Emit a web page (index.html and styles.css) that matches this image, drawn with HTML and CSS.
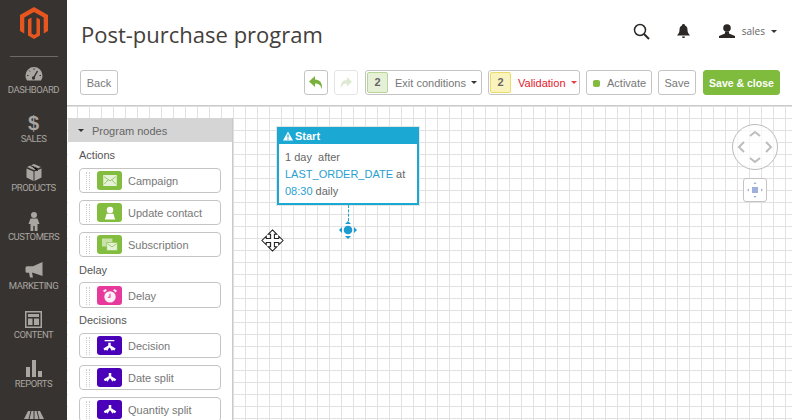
FILE: index.html
```html
<!DOCTYPE html>
<html lang="en">
<head>
<meta charset="utf-8">
<title>Post-purchase program</title>
<link rel="stylesheet" href="styles.css">
</head>
<body>
<div class="app">
  <nav class="sidebar">
    <div class="logo">
      <svg width="28" height="32" viewBox="0 0 28 32"><path fill="#e8561f" d="M14 0 28 8V24L23.700 26.500V10.500L14 5 4.300 10.500V26.500L0 24V8Z"/><path fill="#e8561f" d="M14 32 8 28.500V12.400L11.500 10.400V26.500L14 28 16.500 26.500V10.400L20 12.400V28.500Z"/></svg>
    </div>
    <a class="nav-item">
      <svg width="18" height="16" viewBox="0 0 18 16"><path fill="#a9a5a0" d="M9 1A8.500 8.500 0 0 0 .5 9.500C.5 11.500 1 13 2 14.500H16C17 13 17.500 11.500 17.500 9.500A8.500 8.500 0 0 0 9 1Z"/><path stroke="#373330" stroke-width="1.500" d="M8.500 12 12.500 5"/><circle cx="8.500" cy="12" r="1.700" fill="#373330"/><path stroke="#373330" d="M9 2.500V4M4 4.500 5 5.500M2 9.500H3.500M14.500 9.500H16"/></svg>
      <span>DASHBOARD</span>
    </a>
    <a class="nav-item">
      <span class="dollar">$</span>
      <span>SALES</span>
    </a>
    <a class="nav-item">
      <svg width="16" height="17" viewBox="0 0 16 17"><path fill="#a9a5a0" d="M8 0 15 3 8 6 1 3Z"/><path fill="#a9a5a0" d="M.5 4.500 7.500 7.500V17L.5 13.500ZM15.500 4.500 8.500 7.500V17L15.500 13.500Z"/><path stroke="#373330" d="M4.500 1.500 11.500 4.500V7"/></svg>
      <span>PRODUCTS</span>
    </a>
    <a class="nav-item">
      <svg width="12" height="19" viewBox="0 0 12 19"><circle cx="6" cy="3" r="3" fill="#a9a5a0"/><path fill="#a9a5a0" d="M2.500 6.500H9.500L11.500 12H9.500V19H6.700V14H5.300V19H2.500V12H.5Z"/></svg>
      <span>CUSTOMERS</span>
    </a>
    <a class="nav-item">
      <svg width="18" height="16" viewBox="0 0 18 16"><path fill="#a9a5a0" d="M17.500 0V14L8 10.800H7L8 15.500H5L4 10.800H2A1.500 1.500 0 0 1 .5 9.300V5.700A1.500 1.500 0 0 1 2 4.200H8Z"/></svg>
      <span>MARKETING</span>
    </a>
    <a class="nav-item">
      <svg width="17" height="17" viewBox="0 0 17 17"><path fill="#a9a5a0" fill-rule="evenodd" d="M0 0H17V17H0ZM1.500 1.500V15.500H15.500V1.500Z"/><path fill="#a9a5a0" d="M3 3H14V6H3ZM3 7.500H7.500V14H3ZM9 7.500H14V14H9Z"/></svg>
      <span>CONTENT</span>
    </a>
    <a class="nav-item">
      <svg width="16" height="17" viewBox="0 0 16 17"><path fill="#a9a5a0" d="M0 7H4V17H0ZM6 0H10V17H6ZM12 11H16V17H12Z"/></svg>
      <span>REPORTS</span>
    </a>
    <a class="nav-item">
      <svg width="20" height="22" viewBox="0 -5 20 22"><path fill="#a9a5a0" d="M4 0H16L20 8H0Z"/><path stroke="#373330" d="M7 0 5 8M10 0V8M13 0 15 8"/></svg>
    </a>
  </nav>

  <div class="main">
    <header class="top">
      <h1 class="title">Post-purchase program</h1>
      <div class="top-actions">
        <svg class="search" width="17" height="17" viewBox="0 0 17 17"><circle cx="7" cy="7" r="5.500" fill="none" stroke="#2b2825" stroke-width="1.500"/><path stroke="#2b2825" stroke-width="2" d="M11 11 16 16"/></svg>
        <svg class="bell" width="13" height="14" viewBox="0 0 13 14"><path fill="#2b2825" d="M6.500 0C8 0 8 1 8 1.500 10 2 10.500 4 10.500 6 10.500 9 12 10 13 11.500H0C1 10 2.500 9 2.500 6 2.500 4 3 2 5 1.500 5 1 5 0 6.500 0Z"/><path fill="#2b2825" d="M5 12.500H8C8 13.500 7.300 14 6.500 14S5 13.500 5 12.500Z"/></svg>
        <div class="user">
          <svg width="16" height="14" viewBox="0 0 16 14"><circle cx="8" cy="4" r="3.800" fill="#2b2825"/><path fill="#2b2825" d="M6 7.500H10V9.500L16 12V14H0V12L6 9.500Z"/></svg>
          <span class="user-name">sales</span>
          <i class="caret caret-dark"></i>
        </div>
      </div>
    </header>

    <div class="toolbar">
      <button class="btn back">Back</button>
      <div class="tools">
        <div class="history">
          <button class="btn icon-btn"><svg width="14" height="14" viewBox="0 0 14 14"><path fill="#7ab13e" d="M6 0V3.500C11 3.500 13.500 7 13 13.500 12 9.500 10 7.500 6 7.500V11L0 5.500Z"/></svg></button>
          <button class="btn icon-btn disabled"><svg width="14" height="12" viewBox="0 0 14 14"><path fill="#dfe9d2" d="M8 0V3.500C3 3.500 .5 7 1 13.500 2 9.500 4 7.500 8 7.500V11L14 5.500Z"/></svg></button>
        </div>
        <button class="btn count-btn exit"><span class="count count-green">2</span><span class="count-label">Exit conditions</span><i class="caret caret-dark"></i></button>
        <button class="btn count-btn valid"><span class="count count-yellow">2</span><span class="count-label red">Validation</span><i class="caret caret-red"></i></button>
        <button class="btn activate"><i class="dot"></i>Activate</button>
        <button class="btn save">Save</button>
        <button class="btn primary">Save &amp; close</button>
      </div>
    </div>

    <section class="canvas">
      <aside class="panel">
        <div class="panel-head"><i class="caret caret-dark"></i>Program nodes</div>
        <div class="panel-body">
          <h2 class="group">Actions</h2>
          <div class="node"><i class="grip"></i><span class="tile green"><svg width="14" height="11" viewBox="0 0 16 13"><rect width="16" height="13" fill="#e6f2d8"/><path fill="none" stroke="#8cc152" d="M1 2 8 7 15 2M1 11 6 5.500M15 11 10 5.500"/></svg></span>Campaign</div>
          <div class="node"><i class="grip"></i><span class="tile green"><svg width="12" height="14" viewBox="0 0 14 15"><circle cx="7" cy="4" r="3.800" fill="#fff"/><path fill="#fff" d="M3 8.500H11L13 15H1Z"/></svg></span>Update contact</div>
          <div class="node"><i class="grip"></i><span class="tile green"><svg width="16" height="13" viewBox="0 0 20 15"><rect x="0" y="0" width="13" height="10" fill="#c8e2a8"/><rect x="6" y="5" width="13" height="10" fill="#e6f2d8" stroke="#8cc152" stroke-width=".8"/><path fill="none" stroke="#8cc152" d="M7 6.500 12.500 10.500 18 6.500"/></svg></span>Subscription</div>
          <h2 class="group">Delay</h2>
          <div class="node tall"><i class="grip"></i><span class="tile pink"><svg width="14" height="14" viewBox="0 0 16 16"><circle cx="8" cy="9" r="6.500" fill="#fdf0f7"/><path fill="#fdf0f7" d="M0 2 3 0 4.500 1.500 1.500 4ZM16 2 13 0 11.500 1.500 14.500 4Z"/><path fill="none" stroke="#e6399b" stroke-width="1.200" d="M8 5.500V9.500H5.500"/></svg></span>Delay</div>
          <h2 class="group">Decisions</h2>
          <div class="node"><i class="grip"></i><span class="tile purple"><svg width="13" height="14" viewBox="0 0 16 15"><path fill="#fff" d="M2 0H14V1.500H2ZM6.500 3.500H9.500V7L15.500 10.500 14 13 12 12 11 13.500 8.500 9.500H7.500L5 13.500 4 12 2 13 .5 10.500 6.500 7Z"/></svg></span>Decision</div>
          <div class="node"><i class="grip"></i><span class="tile purple"><svg width="14" height="10" viewBox="0 0 16 12"><path fill="#fff" d="M6.500 0H9.500V4L15.500 7.500 14 10 12 9 11 10.500 8.500 6.500H7.500L5 10.500 4 9 2 10 .5 7.500 6.500 4Z"/></svg></span>Date split</div>
          <div class="node"><i class="grip"></i><span class="tile purple"><svg width="14" height="10" viewBox="0 0 16 12"><path fill="#fff" d="M6.500 0H9.500V4L15.500 7.500 14 10 12 9 11 10.500 8.500 6.500H7.500L5 10.500 4 9 2 10 .5 7.500 6.500 4Z"/></svg></span>Quantity split</div>
        </div>
      </aside>

      <article class="start">
        <div class="start-head"><svg width="10" height="10" viewBox="0 0 12 11"><path fill="#fff" d="M6 0 12 11H0Z"/><path stroke="#1ba8d2" stroke-width="1.400" d="M6 3.500V7.500M6 8.500V10"/></svg>Start</div>
        <div class="start-body">
          <p>1 day&nbsp; after</p>
          <p><a>LAST_ORDER_DATE</a> at</p>
          <p><a>08:30</a> daily</p>
        </div>
      </article>
      <div class="connector">
        <i class="dash"></i>
        <svg width="18" height="18" viewBox="0 0 18 18"><circle cx="9" cy="9" r="4.300" fill="#1b9cd0"/><path fill="#1b9cd0" d="M9 0 12 3H6ZM9 18 6 15H12ZM0 9 3 6V12ZM18 9 15 12V6Z"/></svg>
      </div>

      <svg class="cursor" width="23" height="23" viewBox="0 0 24 24"><path fill="#fff" stroke="#222" stroke-width="1.100" d="M12 1 16.500 5.500H14V10H18.500V7.500L23 12 18.500 16.500V14H14V18.500H16.500L12 23 7.500 18.500H10V14H5.500V16.500L1 12 5.500 7.500V10H10V5.500H7.500Z"/></svg>

      <div class="pan">
        <svg width="46" height="46" viewBox="0 0 46 46"><circle cx="23" cy="23" r="22.500" fill="#fff" fill-opacity=".7" stroke="#bbb"/><path fill="none" stroke="#bdbdbd" stroke-width="2" d="M18 12 23 8 28 12M18 34 23 38 28 34M12 18 7 23 12 28M34 18 39 23 34 28"/></svg>
      </div>
      <button class="center-btn"><svg width="16" height="16" viewBox="0 0 16 16"><rect x="5" y="5" width="6" height="6" fill="#9fb0dc"/><path fill="#9fb0dc" d="M8 0 9.500 2H6.500ZM8 16 6.500 14H9.500ZM0 8 2 6.500V9.500ZM16 8 14 9.500V6.500Z"/></svg></button>
    </section>
  </div>
</div>
</body>
</html>
```
FILE: styles.css
```css
* { box-sizing: border-box; }
html, body { margin: 0; height: 100%; overflow: hidden; }
body { font-family: "Liberation Sans", Arial, sans-serif; font-size: 11px; color: #676767; background: #fff; }
.app { display: flex; height: 420px; overflow: hidden; }

.sidebar { width: 67px; flex: none; background: #373330; display: flex; flex-direction: column; align-items: center; overflow: hidden; }
.logo { width: 48px; height: 57px; flex: none; border-bottom: 1px solid #6d6965; display: flex; justify-content: center; padding-top: 7px; }
.nav-item { width: 100%; height: 49px; flex: none; display: grid; grid-template-rows: 22px 10px; justify-items: center; align-items: center; padding-top: 6px; color: #a9a5a0; font-family: Roboto, sans-serif; font-size: 9.500px; line-height: 10px; letter-spacing: -.45px; }
.nav-item svg { display: block; }
.dollar { font-family: "Liberation Sans", sans-serif; font-weight: 700; font-size: 20px; line-height: 20px; letter-spacing: 0; }

.main { flex: 1; min-width: 0; display: flex; flex-direction: column; }
.top { height: 70px; flex: none; display: flex; justify-content: space-between; padding: 0 15px 0 14px; }
.title { margin: 0; padding-top: 17px; font-family: "Open Sans", sans-serif; font-weight: 400; font-size: 22px; line-height: 34px; color: #44403c; }
.top-actions { display: flex; align-items: center; height: 62px; }
.search { margin-right: 27px; }
.bell { margin-right: 29px; }
.user { display: flex; align-items: center; }
.user-name { margin: 0 6px 0 7px; font-family: "Open Sans", sans-serif; font-size: 10px; color: #666; }

.caret { display: inline-block; flex: none; width: 0; height: 0; border-left: 3px solid transparent; border-right: 3px solid transparent; border-top: 3px solid #333; }
.caret-red { border-top-color: #e8404a; }

.toolbar { height: 36px; flex: none; display: flex; justify-content: space-between; align-items: flex-start; padding: 0 12px 0 13px; border-bottom: 1px solid #c9c9c9; }
.tools { display: flex; gap: 6px; }
.history { display: flex; gap: 6px; margin-right: 1px; }
.btn { height: 25px; padding: 1px 6px 0; border: 1px solid #c4c4c4; border-radius: 3px; background: #fff; color: #777; font: 11px/1 "Liberation Sans", Arial, sans-serif; display: flex; align-items: center; white-space: nowrap; }
.back { width: 38px; justify-content: center; padding: 1px 0 0; }
.icon-btn { width: 24px; justify-content: center; padding: 0; }
.icon-btn.disabled { border-color: #e4e4e4; }
.count-btn { padding: 0 4px 0 1px; }
.exit { width: 117px; }
.valid { width: 92px; }
.count { width: 21px; height: 21px; flex: none; border-radius: 2px; display: flex; align-items: center; justify-content: center; font-weight: 700; color: #666; margin-right: 7px; }
.count-green { background: #e5f0d6; border: 1px solid #b7d596; }
.count-yellow { background: #fbf3bd; border: 1px solid #e9dc6c; }
.count-label { margin-right: 5px; padding-top: 1px; }
.red { color: #e2202c; }
.activate { width: 66px; padding: 1px 0 0 6px; gap: 7px; }
.dot { width: 7px; height: 7px; border-radius: 2px; background: #84bb3f; flex: none; }
.save { width: 38px; justify-content: center; padding: 1px 0 0; }
.primary { width: 77px; margin-left: 1px; justify-content: center; padding: 1px 0 0; background: #7fbb3c; border-color: #7fbb3c; color: #fff; font-weight: 700; font-size: 10.500px; }

.canvas { position: relative; flex: 1; min-height: 0; overflow: hidden; background-color: #fff; background-image: linear-gradient(#e1e1e1 1px, transparent 1px), linear-gradient(90deg, #e1e1e1 1px, transparent 1px); background-size: 12px 12px; background-position: 10px 0; }

.panel { position: absolute; left: 1px; top: 12px; width: 165px; bottom: 0; background: #fff; border-right: 1px solid #c9c9c9; }
.panel-head { height: 24px; padding: 1px 0 0 10px; background: #d5d5d5; display: flex; align-items: center; gap: 8px; color: #666; }
.panel-body { padding: 7px 11px 0; }
.group { margin: 0; font-weight: 400; font-size: 11px; line-height: 13px; color: #555; padding-bottom: 5px; }
.group:first-child { padding-bottom: 6px; }
.node { width: 142px; height: 25px; margin-bottom: 7px; border: 1px solid #c4c4c4; border-radius: 4px; display: flex; align-items: center; padding-left: 6px; color: #777; }
.node.tall { height: 26px; padding-top: 1px; margin-bottom: 6px; }
.tall + .group { padding-bottom: 6px; }
.grip { width: 4px; height: 18px; border-left: 1px dotted #ccc; border-right: 1px dotted #ccc; margin-right: 7px; flex: none; }
.tile { width: 25px; height: 19px; border-radius: 3px; display: flex; align-items: center; justify-content: center; margin-right: 6px; flex: none; }
.tile svg { display: block; }
.green { background: #83bd3f; }
.pink { background: #e6399b; }
.purple { background: #4a00b8; }

.start { position: absolute; left: 210px; top: 21px; width: 142px; height: 78px; border: 2px solid #1ba8d2; background: #fff; box-shadow: 0 0 0 1px #e4e4e4; }
.start-head { height: 16px; margin: -1px -1px 0; background: #1ba8d2; color: #fff; font-weight: 700; font-size: 11px; display: flex; align-items: center; gap: 2px; padding-left: 5px; }
.start-body { padding: 5px 6px; line-height: 17px; }
.start-body p { margin: 0; white-space: nowrap; }
.start-body a { color: #2aa0cf; }
.connector { position: absolute; left: 272px; top: 99px; width: 18px; display: flex; flex-direction: column; align-items: center; }
.dash { width: 0; height: 16px; border-left: 1px dashed #1ba8d2; }
.connector svg { display: block; }

.cursor { position: absolute; left: 194px; top: 123px; }
.pan { position: absolute; left: 665px; top: 18px; width: 46px; height: 46px; }
.pan svg { display: block; }
.center-btn { position: absolute; left: 676px; top: 72px; width: 24px; height: 24px; padding: 0; border: 1px solid #c4c4c4; border-radius: 3px; background: #fff; display: flex; align-items: center; justify-content: center; }
```
